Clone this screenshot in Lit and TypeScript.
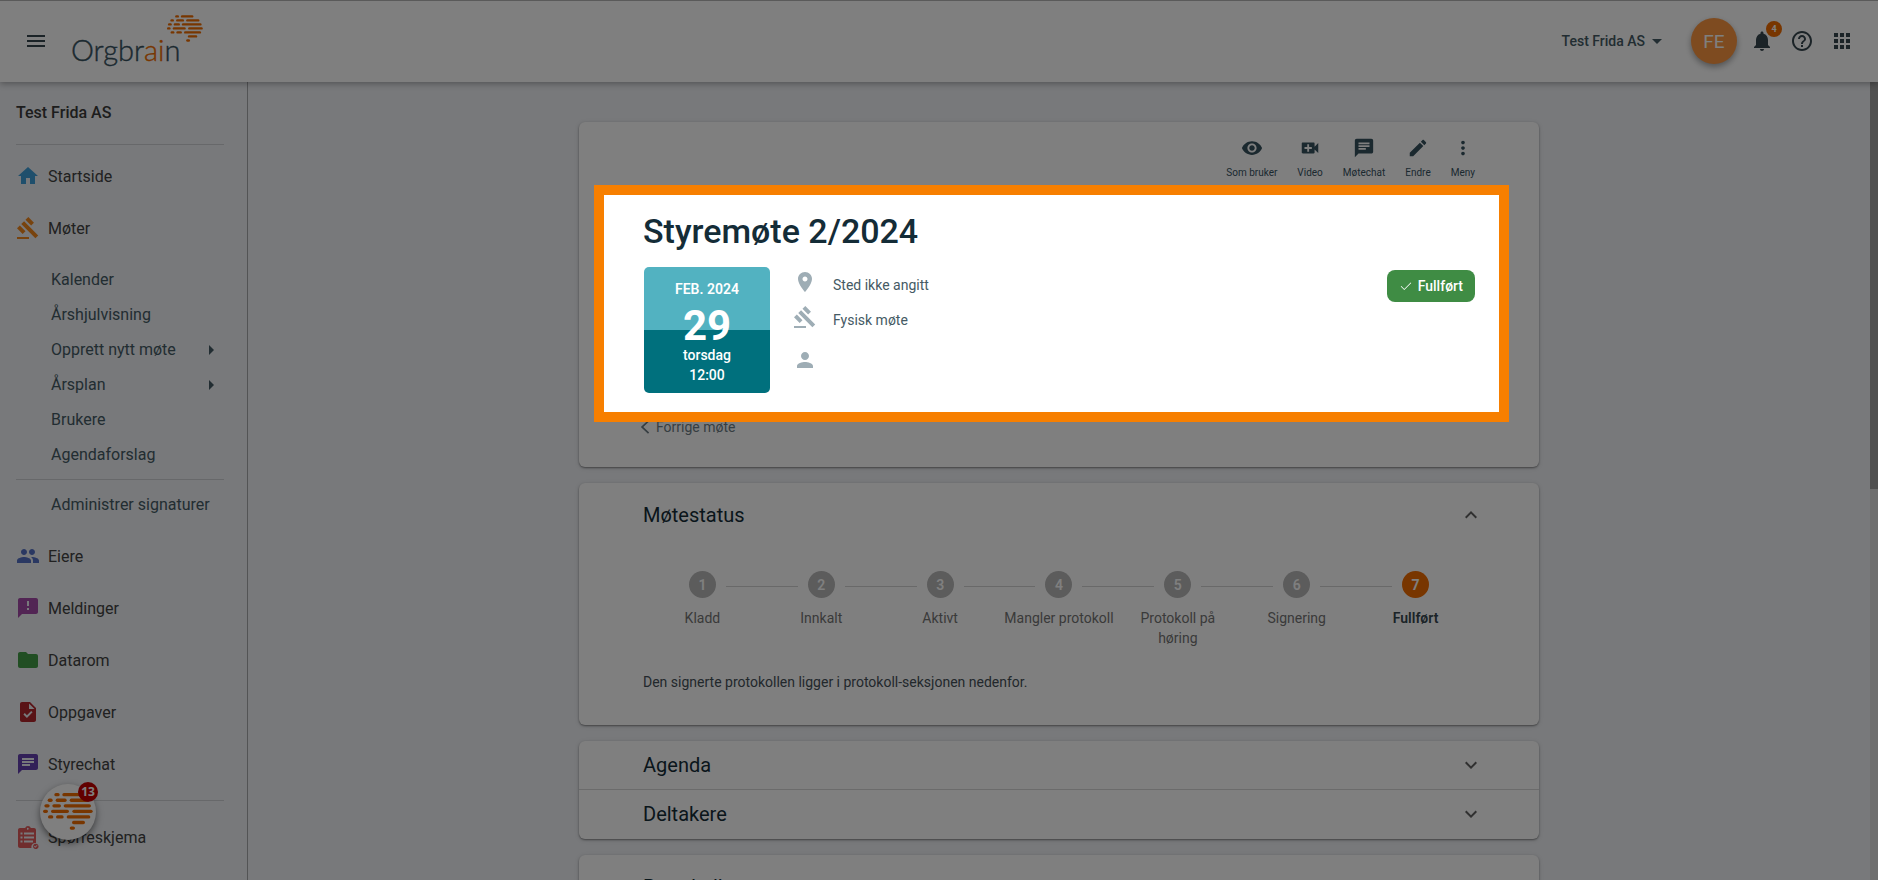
import { LitElement, html, css, svg, nothing } from "lit";
import { customElement, property } from "lit/decorators.js";
import { classMap } from "lit/directives/class-map.js";

const ICONS: Record<string, string> = {
  menu: "M3 18h18v-2H3v2zm0-5h18v-2H3v2zm0-7v2h18V6H3z",
  home: "M10 20v-6h4v6h5v-8h3L12 3 2 12h3v8z",
  gavel:
    "M1 21h12v2H1zM5.245 8.07l2.83-2.827 14.14 14.142-2.828 2.828zM12.317 1l5.657 5.656-2.83 2.83-5.654-5.66zM3.825 9.485l5.657 5.657-2.828 2.828-5.657-5.657z",
  group:
    "M16 11c1.66 0 2.99-1.34 2.99-3S17.66 5 16 5s-3 1.34-3 3 1.34 3 3 3zm-8 0c1.66 0 2.99-1.34 2.99-3S9.66 5 8 5 5 6.34 5 8s1.34 3 3 3zm0 2c-2.33 0-7 1.17-7 3.5V19h14v-2.500c0-2.330-4.670-3.500-7-3.500zm8 0c-.29 0-.62.02-.97.05 1.16.84 1.970 1.970 1.970 3.450V19h6v-2.500c0-2.330-4.670-3.500-7-3.500z",
  feedback: "M20 2H4c-1.100 0-2 .9-2 2v18l4-4h14c1.100 0 2-.9 2-2V4c0-1.100-.9-2-2-2zm-7 12h-2v-2h2v2zm0-4h-2V5h2v5z",
  folder: "M10 4H4c-1.100 0-2 .9-2 2v12c0 1.100.9 2 2 2h16c1.100 0 2-.9 2-2V8c0-1.100-.9-2-2-2h-8l-2-2z",
  task: "M14 2H6c-1.100 0-2 .9-2 2v16c0 1.100.9 2 2 2h12c1.100 0 2-.9 2-2V8l-6-6zm-3.060 16L7.400 14.460l1.410-1.410 2.120 2.120 4.240-4.240 1.410 1.410L10.940 18zM13 9V3.500L18.500 9H13z",
  chat: "M20 2H4c-1.100 0-2 .9-2 2v18l4-4h14c1.100 0 2-.9 2-2V4c0-1.100-.9-2-2-2zM6 6h12v2H6V6zm8 8H6v-2h8v2zm4-3H6V9h12v2z",
  survey:
    "M18 3h-3.200C14.400 1.800 13.300 1 12 1S9.600 1.800 9.200 3H4c-1.100 0-2 .9-2 2v16c0 1.100.9 2 2 2h11.500a4 4 0 0 1 4.500-5V5c0-1.100-.9-2-2-2zm-7 0a1 1 0 1 1 0 1.500zM4.500 7.500h2v2h-2zm3.500 0h10v2H8zM4.500 11.500h2v2h-2zm3.500 0h10v2H8zM4.500 15.500h2v2h-2zm3.500 0h9v2H8zM19.800 18.700a2.700 2.700 0 1 0 .01 0zm-.5 4l-1.300-1.300.6-.6.7.7 1.600-1.600.6.6z",
  bell: "M12 22c1.100 0 2-.9 2-2h-4c0 1.100.89 2 2 2zm6-6v-5c0-3.070-1.640-5.640-4.500-6.320V4c0-.83-.67-1.500-1.500-1.500s-1.500.67-1.500 1.500v.68C7.630 5.360 6 7.920 6 11v5l-2 2v1h16v-1l-2-2z",
  help: "M11 18h2v-2h-2v2zm1-16C6.480 2 2 6.480 2 12s4.480 10 10 10 10-4.480 10-10S17.520 2 12 2zm0 18c-4.410 0-8-3.590-8-8s3.590-8 8-8 8 3.590 8 8-3.590 8-8 8zm0-14c-2.210 0-4 1.790-4 4h2c0-1.100.9-2 2-2s2 .9 2 2c0 2-3 1.750-3 5h2c0-2.250 3-2.500 3-5 0-2.210-1.790-4-4-4z",
  apps: "M4 8h4V4H4v4zm6 12h4v-4h-4v4zm-6 0h4v-4H4v4zm0-6h4v-4H4v4zm6 0h4v-4h-4v4zm6-10v4h4V4h-4zm-6 4h4V4h-4v4zm6 6h4v-4h-4v4zm0 6h4v-4h-4v4z",
  caretDown: "M7 10l5 5 5-5z",
  caretRight: "M10 17l5-5-5-5z",
  eye: "M12 4.500C7 4.500 2.730 7.610 1 12c1.730 4.390 6 7.500 11 7.500s9.270-3.110 11-7.500c-1.730-4.390-6-7.500-11-7.500zM12 17c-2.760 0-5-2.240-5-5s2.240-5 5-5 5 2.240 5 5-2.240 5-5 5zm0-8c-1.660 0-3 1.340-3 3s1.340 3 3 3 3-1.340 3-3-1.340-3-3-3z",
  video:
    "M17 10.500V7c0-.55-.45-1-1-1H4c-.55 0-1 .45-1 1v10c0 .55.45 1 1 1h12c.55 0 1-.45 1-1v-3.500l4 4v-11l-4 4zM14 13h-3v3H9v-3H6v-2h3V8h2v3h3v2z",
  edit: "M3 17.250V21h3.750L17.810 9.940l-3.750-3.750L3 17.250zM20.710 7.040c.39-.39.39-1.020 0-1.410l-2.340-2.340c-.39-.39-1.020-.39-1.410 0l-1.830 1.830 3.750 3.750 1.830-1.830z",
  more: "M12 8c1.100 0 2-.9 2-2s-.9-2-2-2-2 .9-2 2 .9 2 2 2zm0 2c-1.100 0-2 .9-2 2s.9 2 2 2 2-.9 2-2-.9-2-2-2zm0 6c-1.100 0-2 .9-2 2s.9 2 2 2 2-.9 2-2-.9-2-2-2z",
  place:
    "M12 2C8.130 2 5 5.130 5 9c0 5.250 7 13 7 13s7-7.750 7-13c0-3.870-3.130-7-7-7zm0 9.500c-1.380 0-2.500-1.120-2.500-2.500s1.120-2.500 2.500-2.500 2.500 1.120 2.500 2.500-1.120 2.500-2.500 2.500z",
  person: "M12 12c2.210 0 4-1.790 4-4s-1.790-4-4-4-4 1.790-4 4 1.790 4 4 4zm0 2c-2.670 0-8 1.340-8 4v2h16v-2c0-2.660-5.330-4-8-4z",
  check: "M9 17L4 12l-1 1 6 6L21 7l-1-1z",
  up: "M12 8l-6 6 1.410 1.410L12 10.830l4.590 4.580L18 14z",
  down: "M16.590 8.590L12 13.170 7.410 8.590 6 10l6 6 6-6z",
  back: "M17 5.400L15.600 4 7 12l8.600 8 1.400-1.400L10 12z",
};

const icon = (name: string, size = 24) => html`<svg
  width=${size}
  height=${size}
  viewBox="0 0 24 24"
  fill="currentColor"
  aria-hidden="true"
>
  <path fill-rule="evenodd" d=${ICONS[name]}></path>
</svg>`;

/* The brain mark: rows of rounded dashes, each as [start, end]. */
const BRAIN: number[][][] = [
  [[34, 50], [58, 110]],
  [[14, 29], [38, 71], [80, 135]],
  [[4, 20], [28, 54], [62, 144]],
  [[0, 15], [24, 78], [88, 149]],
  [[15, 31], [39, 62], [71, 142]],
  [[87, 126]],
  [[80, 96]],
];

const brain = (width: number, height: number) => html`<svg
  width=${width}
  height=${height}
  viewBox="0 0 150 111"
  fill="#f06c00"
  aria-hidden="true"
>
  ${BRAIN.flatMap((row, i) =>
    row.map(
      ([a, b]) => svg`<rect x=${a} y=${i * 16.7} width=${b - a} height="10" rx="5"></rect>`
    )
  )}
</svg>`;

const base = css`
  * {
    box-sizing: border-box;
  }
  button {
    font: inherit;
    color: inherit;
    background: none;
    border: 0;
    margin: 0;
    padding: 0;
    cursor: pointer;
  }
  a {
    color: inherit;
    text-decoration: none;
  }
  svg {
    display: block;
    flex: none;
  }
`;

@customElement("app-header")
export class AppHeader extends LitElement {
  static styles = [
    base,
    css`
      :host {
        display: block;
        position: relative;
        z-index: 1;
      }
      .bar {
        display: flex;
        align-items: center;
        height: 82px;
        padding: 0 24px;
        background: #fff;
        box-shadow: inset 0 1px #b4b4b4, 0 2px 6px rgba(0, 0, 0, 0.3);
        color: #455a64;
      }
      .menu {
        color: #37474f;
      }
      .logo {
        display: flex;
        align-items: flex-start;
        margin-left: 23px;
        height: 54px;
        width: 132px;
        position: relative;
      }
      .word {
        font: 300 29px/34px Lato, sans-serif;
        -webkit-text-stroke: 0.4px currentColor;
        padding-top: 19px;
        color: #37525f;
      }
      .word b {
        font-weight: 300;
        color: #f06c00;
      }
      .mark {
        position: absolute;
        right: 0;
        top: 1px;
      }
      .org {
        display: flex;
        align-items: center;
        margin-left: auto;
        font-size: 14px;
        font-weight: 500;
      }
      .avatar {
        width: 46px;
        height: 46px;
        margin-left: 22px;
        border-radius: 50%;
        background: #fd9640;
        color: #fff;
        font-size: 19px;
        font-weight: 400;
        box-shadow: 0 3px 6px rgba(0, 0, 0, 0.35);
      }
      .tools {
        display: flex;
        gap: 16px;
        margin-left: 13px;
        color: #37474f;
      }
      .bell {
        position: relative;
      }
      .count {
        position: absolute;
        left: 16px;
        top: -8px;
        width: 16px;
        height: 16px;
        border-radius: 50%;
        background: #f06c00;
        color: #fff;
        font-size: 9px;
        font-weight: 700;
        line-height: 16px;
        text-align: center;
      }
    `,
  ];

  render() {
    return html`<header class="bar">
      <button class="menu" aria-label="Meny">${icon("menu")}</button>
      <a class="logo" href="#" aria-label="Orgbrain">
        <span class="word">Orgbr<b>ai</b>n</span>
        <span class="mark">${brain(36, 27)}</span>
      </a>
      <button class="org">Test Frida AS ${icon("caretDown")}</button>
      <button class="avatar">FE</button>
      <div class="tools">
        <button class="bell" aria-label="Varsler">
          ${icon("bell")}<span class="count">4</span>
        </button>
        <button aria-label="Hjelp">${icon("help")}</button>
        <button aria-label="Apper">${icon("apps")}</button>
      </div>
    </header>`;
  }
}

const NAV_TOP = [
  { label: "Startside", icon: "home", tone: "blue" },
  { label: "Møter", icon: "gavel", tone: "orange" },
];
const NAV_SUB = [
  { label: "Kalender" },
  { label: "Årshjulvisning" },
  { label: "Opprett nytt møte", more: true },
  { label: "Årsplan", more: true },
  { label: "Brukere" },
  { label: "Agendaforslag" },
];
const NAV_REST = [
  { label: "Eiere", icon: "group", tone: "indigo" },
  { label: "Meldinger", icon: "feedback", tone: "purple" },
  { label: "Datarom", icon: "folder", tone: "green" },
  { label: "Oppgaver", icon: "task", tone: "red" },
  { label: "Styrechat", icon: "chat", tone: "violet" },
];

@customElement("app-sidebar")
export class AppSidebar extends LitElement {
  static styles = [
    base,
    css`
      :host {
        display: block;
        flex: none;
        width: 248px;
        border-right: 1px solid #a6a8ab;
      }
      nav {
        padding: 0 23px 0 16px;
        font-size: 16px;
        color: #424242;
      }
      .title {
        margin: 0;
        font-size: 16px;
        font-weight: 500;
        line-height: 62px;
        color: #3a3a3a;
      }
      hr {
        height: 1px;
        margin: 0;
        border: 0;
        background: #cfd1d4;
      }
      .item {
        display: flex;
        align-items: center;
        gap: 8px;
        height: 52px;
      }
      .group {
        padding-top: 5px;
      }
      .subs {
        padding: 8px 0 7px;
      }
      .admin {
        padding: 7px 0 8px;
      }
      .main {
        padding-bottom: 10px;
      }
      .last {
        padding-top: 10px;
      }
      .sub {
        display: flex;
        align-items: center;
        justify-content: space-between;
        height: 35px;
        padding: 0 1px 0 35px;
        color: #455a64;
      }
      .blue { color: #3f9fd8; }
      .orange { color: #f0871c; }
      .indigo { color: #5471c4; }
      .purple { color: #a44aa8; }
      .green { color: #439c46; }
      .red { color: #b3262c; }
      .violet { color: #6440b0; }
      .coral { color: #e05a5a; }
    `,
  ];

  private item(n: { label: string; icon: string; tone: string }) {
    return html`<a class="item" href="#">
      <span class=${n.tone}>${icon(n.icon)}</span>${n.label}
    </a>`;
  }

  private sub(n: { label: string; more?: boolean }) {
    return html`<a class="sub" href="#">
      ${n.label}${n.more ? icon("caretRight") : nothing}
    </a>`;
  }

  render() {
    return html`<nav>
      <h2 class="title">Test Frida AS</h2>
      <hr />
      <div class="group">${NAV_TOP.map((n) => this.item(n))}</div>
      <div class="subs">${NAV_SUB.map((n) => this.sub(n))}</div>
      <hr />
      <div class="admin">${this.sub({ label: "Administrer signaturer" })}</div>
      <div class="main">${NAV_REST.map((n) => this.item(n))}</div>
      <hr />
      <div class="last">
        ${this.item({ label: "Spørreskjema", icon: "survey", tone: "coral" })}
      </div>
    </nav>`;
  }
}

const cardStyles = css`
  :host {
    display: block;
    background: #fff;
    border-radius: 6px;
    box-shadow: 0 1px 2px rgba(0, 0, 0, 0.4), 0 1px 5px rgba(0, 0, 0, 0.12);
  }
`;

const ACTIONS = [
  { label: "Som bruker", icon: "eye" },
  { label: "Video", icon: "video" },
  { label: "Møtechat", icon: "chat" },
  { label: "Endre", icon: "edit" },
  { label: "Meny", icon: "more" },
];

@customElement("meeting-card")
export class MeetingCard extends LitElement {
  static styles = [
    base,
    cardStyles,
    css`
      :host {
        position: relative;
        padding: 15px 64px 30px;
      }
      .actions {
        display: flex;
        justify-content: flex-end;
        gap: 20px;
        color: #37525f;
      }
      .actions button {
        display: flex;
        flex-direction: column;
        align-items: center;
        gap: 8px;
        font-size: 10px;
        line-height: 12px;
      }
      h1 {
        margin: 27px 0 11px;
        font-size: 34px;
        font-weight: 500;
        line-height: 50px;
        color: #142c37;
      }
      .info {
        display: flex;
        align-items: flex-start;
      }
      .date {
        width: 126px;
        height: 126px;
        margin-left: 1px;
        padding-top: 12px;
        border-radius: 5px;
        background: linear-gradient(#52b2c1 50%, #00707d 50%);
        color: #fff;
        font-size: 14px;
        font-weight: 500;
        line-height: 20px;
        text-align: center;
      }
      .month {
        font-weight: 600;
      }
      .day {
        margin-top: 8px;
        font-size: 42px;
        font-weight: 700;
        line-height: 38px;
      }
      .facts {
        display: grid;
        grid-template-columns: 24px auto;
        column-gap: 16px;
        align-items: center;
        margin: 3px 0 0 23px;
        font-size: 14px;
        color: #455a64;
      }
      .facts > * {
        height: 24px;
        line-height: 30px;
        margin: 0 0 11px;
      }
      .facts > .last {
        margin-top: 8px;
      }
      .glyph {
        color: #9eadb5;
      }
      .done {
        display: flex;
        align-items: center;
        gap: 5px;
        height: 32px;
        margin: 3px 0 0 auto;
        padding: 0 12px;
        border-radius: 8px;
        background: #3f8c44;
        color: #fff;
        font-size: 14px;
        font-weight: 500;
      }
      .prev {
        display: flex;
        align-items: center;
        gap: 1px;
        width: fit-content;
        margin: 24px 0 0 -8px;
        font-size: 14px;
        line-height: 20px;
        color: #6d7c84;
      }
      /* Guided-tour spotlight: dims everything outside its frame. */
      .spotlight {
        position: absolute;
        z-index: 10;
        left: 15px;
        right: 30px;
        top: 63px;
        bottom: 45px;
        border: 10px solid #f77f00;
        box-shadow: 0 0 0 9999px rgba(0, 0, 0, 0.5);
        pointer-events: none;
      }
    `,
  ];

  render() {
    return html`
      <div class="actions">
        ${ACTIONS.map((a) => html`<button>${icon(a.icon, 22)}${a.label}</button>`)}
      </div>
      <h1>Styremøte 2/2024</h1>
      <div class="info">
        <div class="date">
          <div class="month">FEB. 2024</div>
          <div class="day">29</div>
          <div>torsdag</div>
          <div>12:00</div>
        </div>
        <div class="facts">
          <span class="glyph">${icon("place")}</span><span>Sted ikke angitt</span>
          <span class="glyph">${icon("gavel")}</span><span>Fysisk møte</span>
          <span class="glyph last">${icon("person")}</span>
        </div>
        <span class="done">${icon("check", 14)}Fullført</span>
      </div>
      <a class="prev" href="#">${icon("back", 20)}Forrige møte</a>
      <div class="spotlight"></div>
    `;
  }
}

const STEPS = ["Kladd", "Innkalt", "Aktivt", "Mangler protokoll", "Protokoll på høring", "Signering", "Fullført"];

@customElement("status-card")
export class StatusCard extends LitElement {
  @property({ type: Number }) current = 7;

  static styles = [
    base,
    cardStyles,
    css`
      :host {
        padding: 16px 64px 33px;
      }
      .head {
        display: flex;
        align-items: center;
        justify-content: space-between;
        width: 100%;
        color: #616161;
      }
      h2 {
        margin: 0;
        font-size: 20px;
        font-weight: 400;
        line-height: 32px;
        color: #142c37;
      }
      .chev {
        margin-right: -8px;
      }
      ol {
        display: grid;
        grid-template-columns: repeat(7, 1fr);
        margin: 40px 0 0;
        padding: 0;
        list-style: none;
        font-size: 14px;
        line-height: 20px;
        text-align: center;
        color: #757575;
      }
      .track {
        display: grid;
        grid-template-columns: 1fr 27px 1fr;
        align-items: center;
        column-gap: 10px;
        margin-bottom: 10px;
      }
      .line {
        height: 1px;
        background: #d2d2d2;
        margin-top: 3px;
      }
      li:first-child .line:first-child,
      li:last-child .line:last-child {
        visibility: hidden;
      }
      .dot {
        height: 27px;
        border-radius: 50%;
        background: #b8b8b8;
        color: #fff;
        font-weight: 600;
        line-height: 28px;
      }
      .label {
        padding: 0 4px;
      }
      .current .dot {
        background: #f06c00;
        font-weight: 700;
      }
      .current .label {
        font-weight: 600;
        color: #37474f;
      }
      p {
        margin: 24px 0 0;
        font-size: 14px;
        line-height: 20px;
        color: #455058;
      }
    `,
  ];

  render() {
    return html`
      <button class="head" aria-expanded="true">
        <h2>Møtestatus</h2>
        <span class="chev">${icon("up")}</span>
      </button>
      <ol>
        ${STEPS.map(
          (s, i) => html`<li class=${classMap({ current: i + 1 === this.current })}>
            <div class="track">
              <span class="line"></span><span class="dot">${i + 1}</span><span class="line"></span>
            </div>
            <div class="label">${s}</div>
          </li>`
        )}
      </ol>
      <p>Den signerte protokollen ligger i protokoll-seksjonen nedenfor.</p>
    `;
  }
}

@customElement("panel-card")
export class PanelCard extends LitElement {
  @property({ attribute: false }) titles: string[] = [];
  @property({ type: Boolean, reflect: true }) roomy = false;

  static styles = [
    base,
    cardStyles,
    css`
      .row {
        display: flex;
        align-items: center;
        justify-content: space-between;
        width: 100%;
        height: 48px;
        padding: 0 56px 0 64px;
        color: #616161;
        text-align: left;
      }
      .row + .row {
        height: 50px;
        padding-bottom: 2px;
        border-top: 1px solid #d6d6d6;
      }
      :host([roomy]) .row {
        height: 64px;
      }
      h2 {
        margin: 0;
        font-size: 20px;
        font-weight: 400;
        line-height: 32px;
        color: #142c37;
      }
    `,
  ];

  render() {
    return html`${this.titles.map(
      (t) => html`<button class="row" aria-expanded="false">
        <h2>${t}</h2>
        ${icon("down")}
      </button>`
    )}`;
  }
}

@customElement("app-root")
export class AppRoot extends LitElement {
  static styles = [
    base,
    css`
      :host {
        display: flex;
        flex-direction: column;
        position: relative;
        height: 100vh;
        overflow: hidden;
        background: #f0f2f6;
        font-family: Roboto, sans-serif;
      }
      .body {
        display: flex;
        flex: 1;
        min-height: 0;
      }
      main {
        flex: 1;
        min-width: 0;
        padding: 40px 24px 0;
      }
      .column {
        display: flex;
        flex-direction: column;
        gap: 16px;
        max-width: 960px;
        margin: 0 auto;
      }
      .scroll {
        flex: none;
        width: 8px;
        background: #dcdcdc;
      }
      .thumb {
        height: 51%;
        background: #a0a0a0;
      }
      .assistant {
        position: absolute;
        z-index: 2;
        left: 40px;
        bottom: 40px;
        display: grid;
        justify-items: center;
        align-content: start;
        width: 56px;
        height: 56px;
        padding-top: 9px;
        border-radius: 50%;
        background: #fff;
        box-shadow: 0 3px 7px rgba(0, 0, 0, 0.5);
      }
      .badge {
        position: absolute;
        right: -2px;
        top: -2px;
        width: 20px;
        height: 20px;
        border-radius: 50%;
        background: #c40000;
        color: #fff;
        font: 700 12px/20px "Open Sans", sans-serif;
        text-align: center;
      }
    `,
  ];

  render() {
    return html`
      <app-header></app-header>
      <div class="body">
        <app-sidebar></app-sidebar>
        <main>
          <div class="column">
            <meeting-card></meeting-card>
            <status-card></status-card>
            <panel-card .titles=${["Agenda", "Deltakere"]}></panel-card>
            <panel-card roomy .titles=${["Protokoller"]}></panel-card>
          </div>
        </main>
        <div class="scroll"><div class="thumb"></div></div>
      </div>
      <button class="assistant" aria-label="Assistent">
        ${brain(50, 37)}<span class="badge">13</span>
      </button>
    `;
  }
}
